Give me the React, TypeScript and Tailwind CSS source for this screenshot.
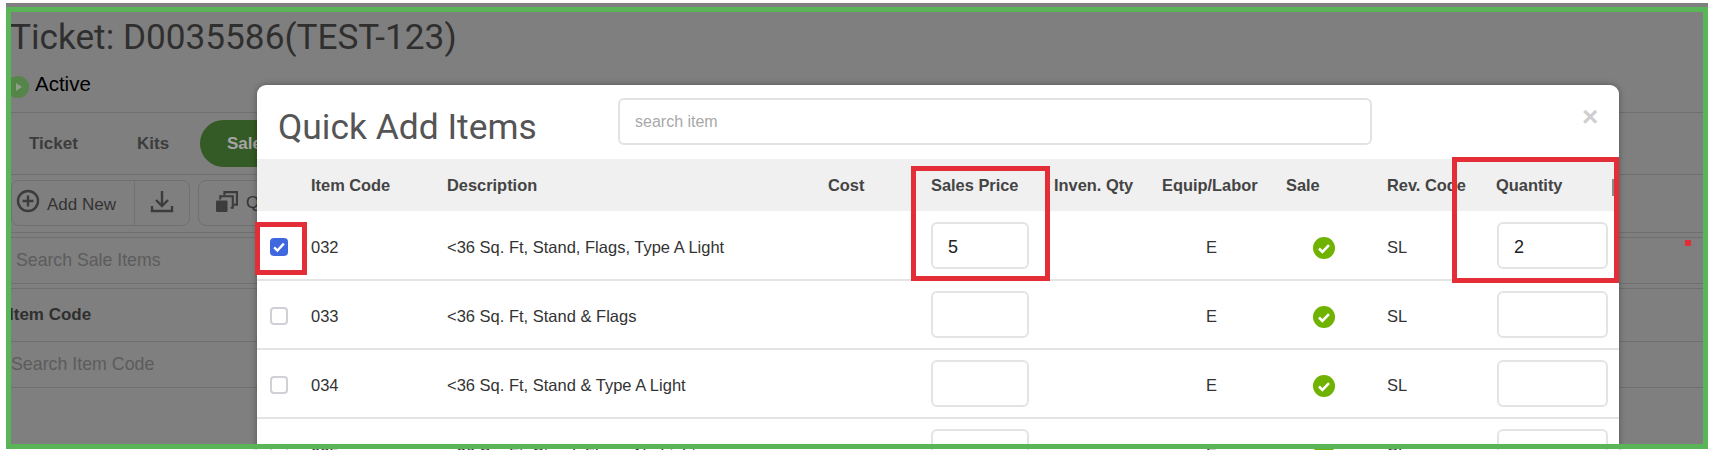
const sans = "font-['Liberation_Sans',Arial,sans-serif]"

const rows = [
  { code: '032', desc: '<36 Sq. Ft, Stand, Flags, Type A Light', checked: true, price: '5', qty: '2' },
  { code: '033', desc: '<36 Sq. Ft, Stand & Flags', checked: false, price: '', qty: '' },
  { code: '034', desc: '<36 Sq. Ft, Stand & Type A Light', checked: false, price: '', qty: '' },
  { code: '035', desc: '<36 Sq. Ft, Stand, Flags, No Light', checked: false, price: '', qty: '' },
]

const columns = 'grid grid-cols-[54px_136px_381px_103px_123px_108px_124px_101px_109px_123px]'

function CheckCircle() {
  return (
    <svg width="22" height="22" viewBox="0 0 22 22">
      <circle cx="11" cy="11" r="11" fill="#6fb200" />
      <path d="M6 11.5l3.4 3.4L16 8.2" fill="none" stroke="#fff" strokeWidth="2.6" />
    </svg>
  )
}

function Box({ checked }: { checked: boolean }) {
  if (checked) {
    return (
      <div className="w-[18px] h-[18px] rounded-[4px] bg-[#3f68e0] flex items-center justify-center">
        <svg width="14" height="14" viewBox="0 0 13 13">
          <path d="M2 6.8l3 3L11 3.4" fill="none" stroke="#fff" strokeWidth="2.2" />
        </svg>
      </div>
    )
  }
  return <div className="w-[18px] h-[18px] rounded-[4px] border-2 border-[#d0d0d6] bg-white" />
}

function Background() {
  return (
    <div className={`h-full bg-[#7f7f7f] text-[#333] ${sans}`}>
      <h1 className="pl-[4px] pt-[13px] h-[63px] font-['Roboto',sans-serif] text-[35.2px] leading-[42px] text-[#2f2f2f] whitespace-nowrap">
        Ticket: D0035586(TEST-123)
      </h1>
      <div className="h-[47px] pt-[10px] pl-[1px] flex items-start gap-[6px] border-b border-[#6f6f6f]">
        <div className="w-[22px] h-[22px] rounded-full bg-[#558548] flex items-center pl-[9px]">
          <div className="border-y-[4px] border-y-transparent border-l-[6px] border-l-[#8f9f88]" />
        </div>
        <span className="-mt-[4px] text-[20.5px] leading-[23px] text-black">Active</span>
      </div>
      <div className="h-[62px] border-b border-[#6f6f6f] flex items-center pl-[23px] font-bold text-[17px] text-[#3c3c3c]">
        <span className="w-[108px]">Ticket</span>
        <span className="w-[63px]">Kits</span>
        <div className="w-[120px] h-[47px] rounded-full bg-[#345a25] text-[#a5a5a5] pl-[27px] flex items-center">Sale Items</div>
      </div>
      <div className="h-[58px] border-b border-[#6f6f6f] flex items-start pt-[5px] pl-[5px] gap-[8px]">
        <div className="h-[46px] w-[179px] border border-[#707070] rounded-[8px] flex items-center text-[17px] text-[#333]">
          <svg width="24" height="24" viewBox="0 0 24 24" className="ml-[4px] mr-[7px] mb-[4px]" fill="none" stroke="#3c3c3c" strokeWidth="2.4">
            <circle cx="12" cy="12" r="10" />
            <path d="M12 6.5v11M6.5 12h11" />
          </svg>
          <span className="w-[87px] pt-[3px]">Add New</span>
          <div className="h-full border-l border-[#707070] flex-1 flex items-center justify-center">
            <svg width="24" height="24" viewBox="0 0 24 24" className="mb-[4px]" fill="none" stroke="#3c3c3c" strokeWidth="2.4">
              <path d="M12 2v14M6 11l6 6 6-6M2 17v5h20v-5" />
            </svg>
          </div>
        </div>
        <div className="h-[46px] w-[120px] border border-[#707070] rounded-[8px] flex items-center text-[17px] pl-[16px] gap-[8px]">
          <svg width="23" height="23" viewBox="0 0 22 22" className="mb-[4px]" fill="none" stroke="#3c3c3c" strokeWidth="2">
            <path d="M9 5V2h12v12h-3" />
            <path d="M5 9V6h12v11h-2" />
            <rect x="1" y="10" width="11" height="11" fill="#3c3c3c" stroke="none" rx="1" />
          </svg>
          Quick
        </div>
      </div>
      <div className="h-[5px] border-b border-[#6f6f6f]" />
      <div className="h-[46px] border-b border-[#6f6f6f] flex items-center pl-[10px] text-[17.7px] text-[#5c5c5c]">Search Sale Items</div>
      <div className="h-[5px] border-b border-[#6f6f6f]" />
      <div className="h-[53px] border-b border-[#6f6f6f] flex items-center pl-[3px] font-bold text-[17px] text-[#2f2f2f]">Item Code</div>
      <div className="h-[46px] border-b border-[#6f6f6f] flex items-center pl-[5px] text-[17.8px] text-[#5c5c5c]">Search Item Code</div>
    </div>
  )
}

function Modal() {
  return (
    <div className={`absolute left-[257px] top-[85px] w-[1362px] h-[400px] bg-white rounded-t-[9px] shadow-[0_0_6px_rgba(0,0,0,0.35)] overflow-hidden ${sans}`}>
      <div className="h-[74px] flex items-start">
        <h2 className="w-[361px] pl-[21px] pt-[20px] font-['Roboto',sans-serif] text-[35.4px] leading-[44px] text-[#555]">Quick Add Items</h2>
        <div className="mt-[13px] w-[754px] h-[47px] border-2 border-[#e2e2e2] rounded-[6px] pl-[15px] flex items-center text-[16px] text-[#a8a8a8]">search item</div>
        <div className="ml-[210px] mt-[17px] text-[28px] leading-[30px] font-bold text-[#cfcfcf]">×</div>
      </div>
      <div className={`${columns} relative h-[52px] items-center bg-[#f0f0f0] text-[16.4px] font-bold text-[#444] whitespace-nowrap`}>
        <span />
        <span>Item Code</span>
        <span>Description</span>
        <span>Cost</span>
        <span>Sales Price</span>
        <span>Inven. Qty</span>
        <span>Equip/Labor</span>
        <span>Sale</span>
        <span>Rev. Code</span>
        <span>Quantity</span>
        <div className="absolute left-[1355px] top-[20px] w-[5px] h-[17px] bg-[#8a8a8a]" />
      </div>
      <div className="pt-[1px]">
        {rows.map((r) => (
          <div key={r.code} className={`${columns} h-[69px] items-center border-b-2 border-[#e4e4e4] text-[16.5px] text-[#333] whitespace-nowrap`}>
            <div className="pl-[13px] pt-[2px]">
              <Box checked={r.checked} />
            </div>
            <span className="pt-[4px]">{r.code}</span>
            <span className="col-span-2 pt-[4px]">{r.desc}</span>
            <div className="w-[98px] h-[47px] border-2 border-[#e4e4e4] rounded-[6px] pl-[15px] pt-[3px] flex items-center text-[18px] text-[#222]">{r.price}</div>
            <span />
            <span className="pl-[44px] pt-[4px]">E</span>
            <div className="pl-[27px] pt-[4px]">
              <CheckCircle />
            </div>
            <span className="pt-[4px]">SL</span>
            <div className="ml-[1px] w-[111px] h-[47px] border-2 border-[#e4e4e4] rounded-[6px] pl-[15px] pt-[3px] flex items-center text-[18px] text-[#222]">{r.qty}</div>
          </div>
        ))}
      </div>
    </div>
  )
}

export default function App() {
  return (
    <div className="relative w-[1714px] h-[450px] overflow-hidden bg-white">
      <div className="absolute left-[6px] top-[3px] right-[6px] bottom-[1px]">
        <Background />
      </div>
      <Modal />

      {/* annotation boxes drawn over the screenshot */}
      <div className="absolute left-[255px] top-[222px] w-[52px] h-[53px] border-[5px] border-[#e32d37]" />
      <div className="absolute left-[911px] top-[166px] w-[139px] h-[115px] border-[5px] border-[#e32d37]" />
      <div className="absolute left-[1452px] top-[157px] w-[167px] h-[126px] border-[5px] border-[#e32d37]" />
      <div className="absolute left-[1685px] top-[240px] w-[6px] h-[6px] bg-[#e32d37]" />
      <div className="absolute left-[6px] top-[7px] w-[1702px] h-[442px] border-[5px] border-[#5ab558]" />
    </div>
  )
}
